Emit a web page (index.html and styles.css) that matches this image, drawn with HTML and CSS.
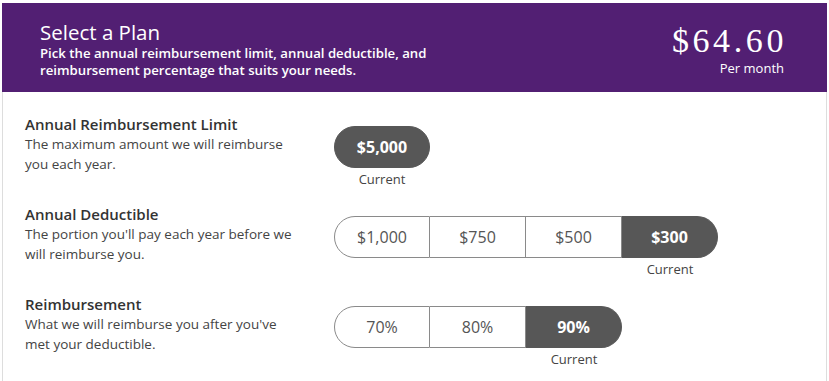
FILE: index.html
```html
<!DOCTYPE html>
<html lang="en">
<head>
<meta charset="utf-8">
<title>Select a Plan</title>
<link rel="stylesheet" href="styles.css">
</head>
<body>
<div class="plan">
  <header class="plan-head">
    <div class="head-text">
      <h1 class="head-title">Select a Plan</h1>
      <p class="head-sub">Pick the annual reimbursement limit, annual deductible, and<br>reimbursement percentage that suits your needs.</p>
    </div>
    <div class="price">
      <div class="amount">$64.60</div>
      <div class="per">Per month</div>
    </div>
  </header>
  <section class="options">
    <div class="row">
      <div class="info">
        <h2 class="row-title">Annual Reimbursement Limit</h2>
        <p class="row-desc">The maximum amount we will reimburse<br>you each year.</p>
      </div>
      <div class="choice">
        <div class="cell">
          <div class="opt first last sel">$5,000</div>
          <div class="current">Current</div>
        </div>
      </div>
    </div>
    <div class="row">
      <div class="info">
        <h2 class="row-title">Annual Deductible</h2>
        <p class="row-desc">The portion you'll pay each year before we<br>will reimburse you.</p>
      </div>
      <div class="choice">
        <div class="cell"><div class="opt first">$1,000</div></div>
        <div class="cell"><div class="opt">$750</div></div>
        <div class="cell"><div class="opt">$500</div></div>
        <div class="cell">
          <div class="opt last sel">$300</div>
          <div class="current">Current</div>
        </div>
      </div>
    </div>
    <div class="row">
      <div class="info">
        <h2 class="row-title">Reimbursement</h2>
        <p class="row-desc">What we will reimburse you after you've<br>met your deductible.</p>
      </div>
      <div class="choice">
        <div class="cell"><div class="opt first">70%</div></div>
        <div class="cell"><div class="opt">80%</div></div>
        <div class="cell">
          <div class="opt last sel">90%</div>
          <div class="current">Current</div>
        </div>
      </div>
    </div>
    <div class="rule"></div>
  </section>
</div>
</body>
</html>
```

FILE: styles.css
```css
html, body {
  margin: 0;
  padding: 0;
  background: #ffffff;
}

body {
  font-family: "Open Sans", "Liberation Sans", sans-serif;
  color: #333333;
}

.plan {
  margin: 3px 2px 0 2px;
  width: 825px;
}

.plan-head {
  background: #521f73;
  color: #ffffff;
  height: 89px;
  display: flex;
  justify-content: space-between;
  box-sizing: border-box;
  padding: 17px 43px 0 38px;
}

.head-title {
  margin: 0;
  font-size: 20.5px;
  font-weight: 400;
  line-height: 25px;
}

.head-sub {
  margin: 0;
  font-size: 13.2px;
  line-height: 17px;
  font-weight: 600;
}

.price {
  display: flex;
  flex-direction: column;
  align-items: flex-end;
  padding-top: 6px;
}

.amount {
  font-family: "Liberation Serif", "DejaVu Serif", serif;
  font-size: 34px;
  line-height: 30px;
  letter-spacing: 3.6px;
  margin-right: -3px;
}

.per {
  font-size: 13px;
  line-height: 16px;
  margin-top: 4px;
}

.options {
  border-left: 1px solid #dddddd;
  border-right: 1px solid #dddddd;
  padding: 23px 10px 0 10px;
  display: flex;
  flex-direction: column;
  gap: 18px;
}

.row {
  display: flex;
  padding-left: 12px;
}

.info {
  width: 309px;
}

.row-title {
  margin: 0;
  font-size: 15px;
  font-weight: 600;
  line-height: 18px;
  color: #333333;
}

.row-desc {
  margin: 1px 0 0 0;
  font-size: 13.5px;
  line-height: 20px;
  color: #444444;
}

.choice {
  display: flex;
  padding-top: 11px;
}

.cell {
  display: flex;
  flex-direction: column;
  align-items: center;
  width: 96px;
}

.opt {
  width: 96px;
  height: 42px;
  box-sizing: border-box;
  border: 1px solid #8a8a8a;
  border-left: none;
  display: flex;
  align-items: center;
  justify-content: center;
  font-size: 16px;
  color: #555555;
  background: #ffffff;
}

.opt.first {
  border-left: 1px solid #8a8a8a;
  border-radius: 21px 0 0 21px;
}

.opt.last {
  border-radius: 0 21px 21px 0;
}

.opt.first.last {
  border-radius: 21px;
}

.opt.sel {
  background: #575757;
  border-color: #575757;
  color: #ffffff;
  font-weight: 700;
}

.current {
  font-size: 13px;
  line-height: 16px;
  margin-top: 3px;
  color: #444444;
}

.rule {
  margin-top: -4px;
  border-bottom: 1px solid #cccccc;
  height: 0;
}
```
